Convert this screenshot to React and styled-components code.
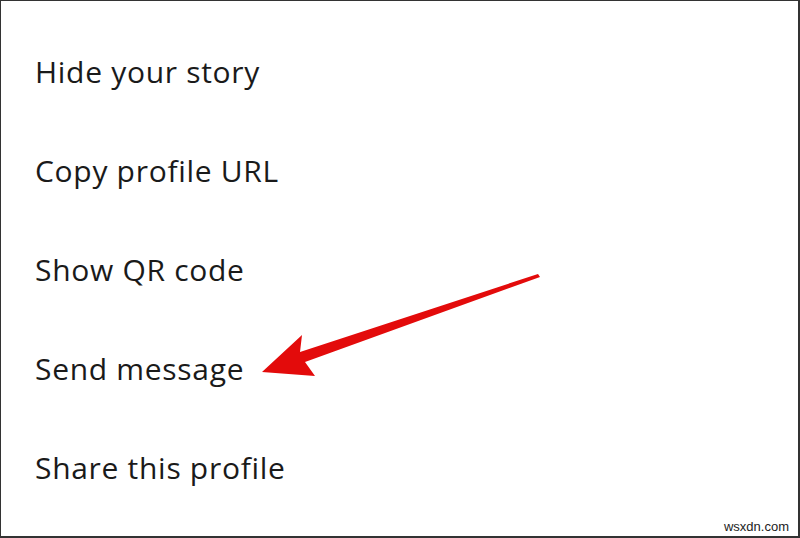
import React from 'react';
import styled, { createGlobalStyle } from 'styled-components';

const GlobalStyle = createGlobalStyle`
  html, body {
    margin: 0;
    padding: 0;
    background: #fff;
  }
  * {
    box-sizing: border-box;
  }
`;

const items = [
  'Hide your story',
  'Copy profile URL',
  'Show QR code',
  'Send message',
  'Share this profile',
];

const App = () => {
  return (
    <>
      <GlobalStyle />
      <Frame>
        <Menu>
          {items.map((label) => (
            <MenuItem key={label}>{label}</MenuItem>
          ))}
        </Menu>
        <Pointer viewBox="0 0 800 538" width="800" height="538">
          <polygon
            points="262,372 302,335 300,352 538,274 540,277 305,362 315,376"
            fill="#e30b0b"
          />
        </Pointer>
        <Watermark>wsxdn.com</Watermark>
      </Frame>
    </>
  );
};

export default App;

const Frame = styled.div`
  position: relative;
  width: 800px;
  height: 538px;
  border-top: 1px solid #333;
  border-left: 1px solid #333;
  border-right: 2px solid #333;
  border-bottom: 2px solid #333;
  background: #fff;
  overflow: hidden;
`;

const Menu = styled.ul`
  list-style: none;
  margin: 0;
  padding: 21px 0 0 34px;
  display: flex;
  flex-direction: column;
`;

const MenuItem = styled.li`
  height: 99px;
  line-height: 99px;
  font-family: "Open Sans", Roboto, sans-serif;
  font-size: 30px;
  letter-spacing: 0.7px;
  color: #1a1a1a;
`;

const Pointer = styled.svg`
  position: absolute;
  top: -1px;
  left: -1px;
  pointer-events: none;
`;

const Watermark = styled.span`
  position: absolute;
  right: 9px;
  bottom: 2px;
  font-family: "Liberation Sans", Arial, sans-serif;
  font-size: 13px;
  color: #222;
`;
